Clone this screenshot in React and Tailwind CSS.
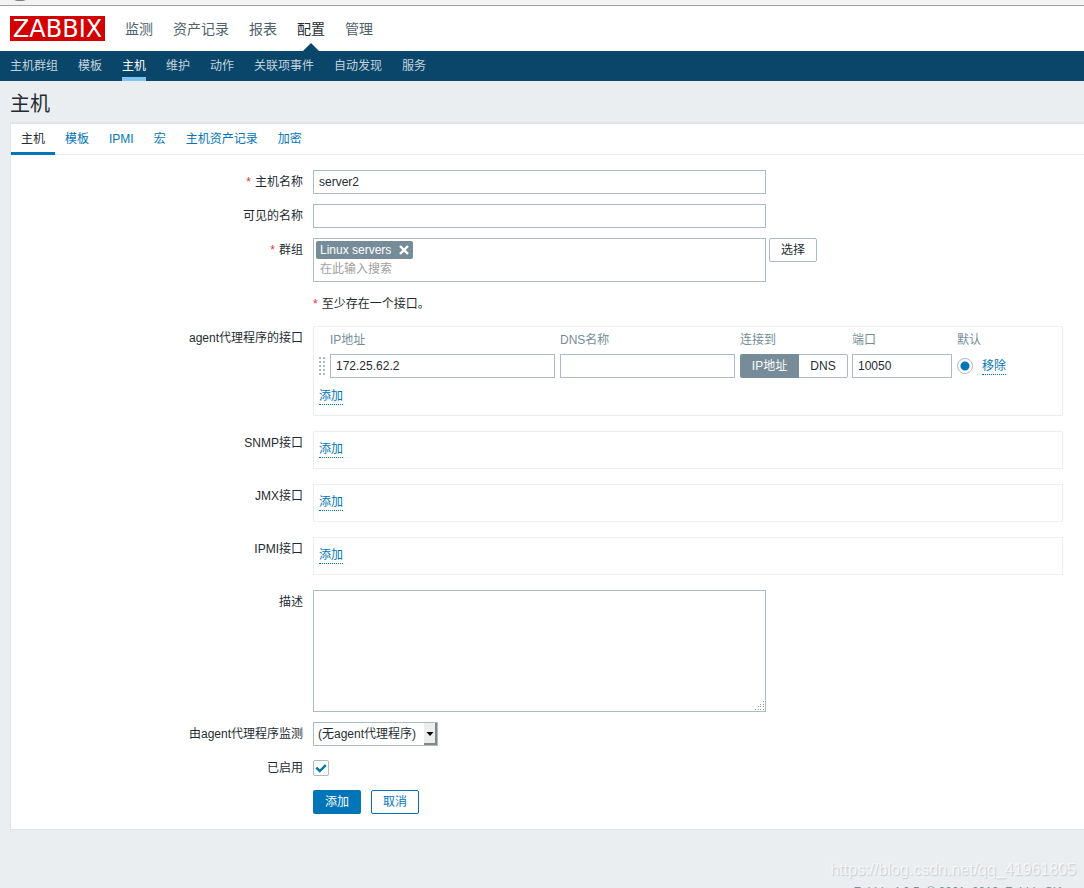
import React from "react";

const mainNav = ["监测", "资产记录", "报表", "配置", "管理"];
const subNav = ["主机群组", "模板", "主机", "维护", "动作", "关联项事件", "自动发现", "服务"];
const tabs = ["主机", "模板", "IPMI", "宏", "主机资产记录", "加密"];

const field = "h-6 border border-[#acbbc2] bg-white px-[5px] text-[#1f2c33] outline-none";

function Logo() {
  return (
    <a
      href="#home"
      className="flex h-[25px] w-[95px] items-center justify-center bg-[#d40000] font-['DejaVu_Sans',sans-serif] text-2xl leading-none text-white"
    >
      ZABBIX
    </a>
  );
}

function Row({ label, htmlFor, required, children }) {
  const Tag = htmlFor ? "label" : "span";
  return (
    <div className="grid grid-cols-[292px_minmax(0,1fr)] gap-x-2.5">
      <div className="text-right leading-6">
        {label && (
          <Tag htmlFor={htmlFor}>
            {required && <span className="mr-1 text-[#e33734]">*</span>}
            {label}
          </Tag>
        )}
      </div>
      <div className="flex items-start">{children}</div>
    </div>
  );
}

function TextLink({ children }) {
  return (
    <a href="#action" className="inline-block border-b border-dotted border-[#0275b8] leading-4 text-[#0275b8]">
      {children}
    </a>
  );
}

function DragHandle() {
  return (
    <svg width="6" height="18" viewBox="0 0 6 18" fill="#acbbc2" shapeRendering="crispEdges" aria-hidden="true">
      {[0, 4, 8, 12, 16].map((y) => (
        <g key={y}>
          <rect x="0" y={y} width="2" height="2" />
          <rect x="4" y={y} width="2" height="2" />
        </g>
      ))}
    </svg>
  );
}

function InterfaceBox({ children }) {
  return <div className="w-full border border-[#ebeef0] px-[5px] pb-2.5">{children}</div>;
}

function AgentInterfaces() {
  return (
    <InterfaceBox>
      <table className="mt-[3px] mb-2.5 table-fixed border-collapse text-left">
        <colgroup>
          <col className="w-[11px]" />
          <col className="w-[230px]" />
          <col className="w-[180px]" />
          <col className="w-[112px]" />
          <col className="w-[105px]" />
          <col className="w-[25px]" />
          <col className="w-[70px]" />
        </colgroup>
        <thead>
          <tr className="h-6 align-top leading-5 text-[#768d99]">
            <td></td>
            <th className="font-normal">IP地址</th>
            <th className="font-normal">DNS名称</th>
            <th className="font-normal">连接到</th>
            <th className="font-normal">端口</th>
            <th className="font-normal" colSpan={2}>默认</th>
          </tr>
        </thead>
        <tbody>
          <tr className="h-6">
            <td><DragHandle /></td>
            <td className="pr-[5px]">
              <input aria-label="IP地址" defaultValue="172.25.62.2" className={`${field} block w-full`} />
            </td>
            <td className="pr-[5px]">
              <input aria-label="DNS名称" className={`${field} block w-full`} />
            </td>
            <td>
              <div className="flex h-6">
                <button type="button" className="w-[59px] rounded-l-xs bg-[#768d99] text-white">IP地址</button>
                <button type="button" className="w-[49px] rounded-r-xs border border-l-0 border-[#acbbc2]">DNS</button>
              </div>
            </td>
            <td className="pr-[5px]">
              <input aria-label="端口" defaultValue="10050" className={`${field} block w-full`} />
            </td>
            <td>
              <input
                type="radio"
                aria-label="默认"
                defaultChecked
                className="block size-4 appearance-none rounded-full border border-[#acbbc2] bg-white checked:bg-[radial-gradient(circle,#0275b8_4px,transparent_5px)]"
              />
            </td>
            <td><TextLink>移除</TextLink></td>
          </tr>
        </tbody>
      </table>
      <div className="flex"><TextLink>添加</TextLink></div>
    </InterfaceBox>
  );
}

function EmptyInterfaces() {
  return (
    <InterfaceBox>
      <div className="flex pt-[9px]"><TextLink>添加</TextLink></div>
    </InterfaceBox>
  );
}

function ResizeGrip() {
  return (
    <svg className="pointer-events-none absolute right-px bottom-px" width="10" height="10" fill="#8f9a94" aria-hidden="true">
      {[[8, 0], [5, 3], [8, 3], [3, 5], [5, 5], [8, 5], [0, 8], [3, 8], [5, 8], [8, 8]].map(([x, y]) => (
        <rect key={`${x}-${y}`} x={x} y={y} width="1" height="1" />
      ))}
    </svg>
  );
}

function HostForm() {
  return (
    <form className="pt-[15px] pr-[21px] pb-[15px]">
      <div className="flex flex-col gap-2.5">
        <Row label="主机名称" htmlFor="host" required>
          <input id="host" defaultValue="server2" className={`${field} w-full max-w-[453px]`} />
        </Row>
        <Row label="可见的名称" htmlFor="visible">
          <input id="visible" className={`${field} w-full max-w-[453px]`} />
        </Row>
        <Row label="群组" htmlFor="groups" required>
          <div className="h-11 w-full max-w-[453px] border border-[#acbbc2] p-0.5">
            <span className="flex h-[18px] w-fit items-center gap-2 rounded-xs bg-[#768d99] px-1 text-white">
              Linux servers
              <button type="button" aria-label="移除 Linux servers">
                <svg width="10" height="10" viewBox="0 0 10 10" stroke="#fff" strokeWidth="2.4" aria-hidden="true">
                  <path d="M1 1l8 8M9 1l-8 8" />
                </svg>
              </button>
            </span>
            <input
              id="groups"
              placeholder="在此输入搜索"
              className="block h-5 w-full px-1 outline-none placeholder:text-[#a0a0a0]"
            />
          </div>
          <button type="button" className="ml-[3px] h-6 w-12 shrink-0 rounded-xs border border-[#acbbc2]">选择</button>
        </Row>
        <Row>
          <p className="leading-6"><span className="mr-1 text-[#e33734]">*</span>至少存在一个接口。</p>
        </Row>
      </div>

      <div className="mt-2.5 flex flex-col gap-[15px]">
        <Row label="agent代理程序的接口"><AgentInterfaces /></Row>
        <Row label="SNMP接口"><EmptyInterfaces /></Row>
        <Row label="JMX接口"><EmptyInterfaces /></Row>
        <Row label="IPMI接口"><EmptyInterfaces /></Row>
      </div>

      <div className="mt-[15px] flex flex-col gap-2.5">
        <Row label="描述" htmlFor="description">
          <div className="relative w-full max-w-[453px]">
            <textarea
              id="description"
              className="block h-[122px] w-full resize-none border border-[#acbbc2] bg-white p-[5px] outline-none"
            />
            <ResizeGrip />
          </div>
        </Row>
        <Row label="由agent代理程序监测" htmlFor="proxy">
          <div className="relative">
            <select
              id="proxy"
              className="block h-6 w-[125px] appearance-none border border-[#acbbc2] bg-white px-1 outline-none"
            >
              <option>(无agent代理程序)</option>
            </select>
            <svg className="pointer-events-none absolute top-px right-px" width="13" height="22" aria-hidden="true">
              <rect width="13" height="22" fill="#ededed" />
              <path d="M12 0v21H0" fill="none" stroke="#868686" strokeWidth="2" />
              <path d="M2.5 9h7l-3.5 4z" fill="#000" />
            </svg>
          </div>
        </Row>
        <Row label="已启用" htmlFor="enabled">
          <div className="relative my-1">
            <input
              id="enabled"
              type="checkbox"
              defaultChecked
              className="peer block size-4 appearance-none rounded-xs border border-[#acbbc2] bg-white"
            />
            <svg
              className="pointer-events-none absolute inset-0 hidden peer-checked:block"
              width="16"
              height="16"
              fill="none"
              stroke="#0275b8"
              strokeWidth="2.4"
              aria-hidden="true"
            >
              <path d="M3.3 7.6l3.5 3.4 6-5.8" />
            </svg>
          </div>
        </Row>
        <Row>
          <div className="flex gap-2.5">
            <button type="submit" className="h-6 w-12 rounded-xs bg-[#0275b8] text-white">添加</button>
            <button type="button" className="h-6 w-12 rounded-xs border border-[#0275b8] text-[#0275b8]">取消</button>
          </div>
        </Row>
      </div>
    </form>
  );
}

export default function App() {
  return (
    <div className="relative h-screen overflow-hidden bg-[#ebeef0] font-['Liberation_Sans','Noto_Sans_CJK_SC',sans-serif] text-xs text-[#1f2c33]">
      <div className="h-1.5 border-b border-[#a0a0a0] bg-[#f3f3f3] pl-3.5">
        <svg width="12" height="2" className="block" aria-hidden="true">
          <path d="M0 0h12l-3 1H3z" fill="#808080" />
        </svg>
      </div>

      <header>
        <div className="flex h-[45px] items-center gap-5 bg-white pl-2.5">
          <Logo />
          <nav className="flex h-full gap-5 text-sm">
            {mainNav.map((item) => (
              <a
                key={item}
                href="#menu"
                className={
                  item === "配置"
                    ? "relative flex items-center text-[#1f2c33]"
                    : "flex items-center text-[#4f626c]"
                }
              >
                {item}
                {item === "配置" && (
                  <svg className="absolute bottom-0 left-1/2 -translate-x-1/2" width="16" height="8" aria-hidden="true">
                    <path d="M0 8l8-8 8 8z" fill="#0a466a" />
                  </svg>
                )}
              </a>
            ))}
          </nav>
        </div>
        <nav className="flex h-[30px] gap-5 bg-[#0a466a] pl-2.5">
          {subNav.map((item) => (
            <a
              key={item}
              href="#submenu"
              className={
                item === "主机"
                  ? "border-b-4 border-[#7ec5f4] leading-[30px] text-white"
                  : "border-b-4 border-transparent leading-[30px] text-[#c3d3dd]"
              }
            >
              {item}
            </a>
          ))}
        </nav>
      </header>

      <main className="pl-2.5">
        <h1 className="h-[41px] text-xl leading-[46px]">主机</h1>
        <section className="border-t-2 border-b border-l border-[#dfe4e7] bg-white">
          <nav className="flex h-[31px] border-b border-[#ebeef0]">
            {tabs.map((tab, i) => (
              <a
                key={tab}
                href="#tab"
                className={
                  i === 0
                    ? "h-[31px] border-b-3 border-[#0275b8] px-2.5 leading-[30px]"
                    : "px-2.5 leading-[30px] text-[#0275b8]"
                }
              >
                {tab}
              </a>
            ))}
          </nav>
          <HostForm />
        </section>
      </main>

      <footer className="mt-[54px] pr-5 text-right leading-4 text-[#768d99]">
        Zabbix 4.0.5. © 2001–2019, <a href="#company">Zabbix SIA</a>
      </footer>
      <div className="pointer-events-none absolute right-2 bottom-2 text-base leading-5 text-white/70 [text-shadow:1px_1px_1px_#c8ccd0]">
        https://blog.csdn.net/qq_41961805
      </div>
    </div>
  );
}
